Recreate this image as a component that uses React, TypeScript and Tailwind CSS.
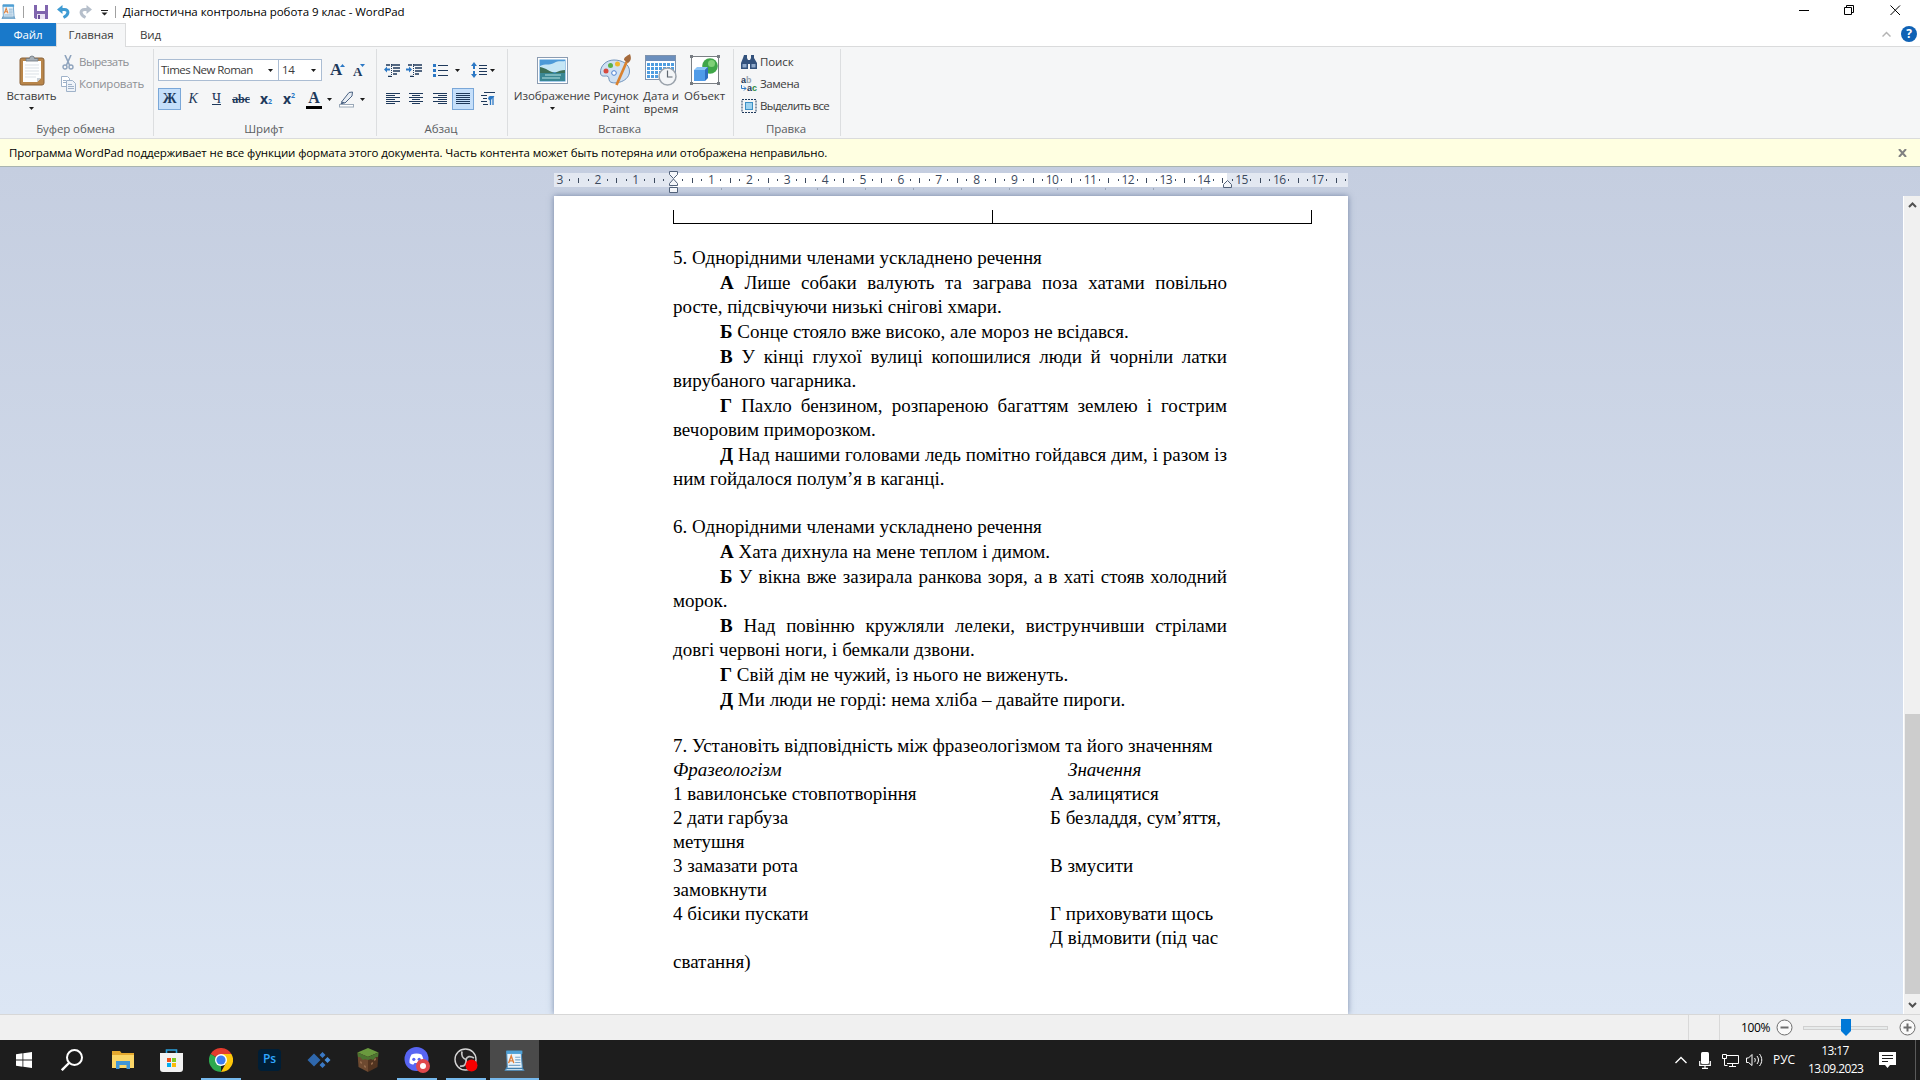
import type { ReactNode } from 'react'
import clsx from 'clsx'

const DOC_LINES_5: DocLine[] = [
  { text: '5. Однорідними членами ускладнено речення' },
  { mark: 'А', text: 'Лише собаки валують та заграва поза хатами повільно', justify: true },
  { text: 'росте, підсвічуючи низькі снігові хмари.' },
  { mark: 'Б', text: 'Сонце стояло вже високо, але мороз не всідався.' },
  { mark: 'В', text: 'У кінці глухої вулиці копошилися люди й чорніли латки', justify: true },
  { text: 'вирубаного чагарника.' },
  { mark: 'Г', text: 'Пахло бензином, розпареною багаттям землею і гострим', justify: true },
  { text: 'вечоровим приморозком.' },
  { mark: 'Д', text: 'Над нашими головами ледь помітно гойдався дим, і разом із', justify: true },
  { text: 'ним гойдалося полум’я в каганці.' },
]

const DOC_LINES_6: DocLine[] = [
  { text: '6. Однорідними членами ускладнено речення' },
  { mark: 'А', text: 'Хата дихнула на мене теплом і димом.' },
  { mark: 'Б', text: 'У вікна вже зазирала ранкова зоря, а в хаті стояв холодний', justify: true },
  { text: 'морок.' },
  { mark: 'В', text: 'Над повінню кружляли лелеки, виструнчивши стрілами', justify: true },
  { text: 'довгі червоні ноги, і бемкали дзвони.' },
  { mark: 'Г', text: 'Свій дім не чужий, із нього не виженуть.' },
  { mark: 'Д', text: 'Ми люди не горді: нема хліба – давайте пироги.' },
]

const PAIRS = [
  ['1 вавилонське стовпотворіння', 'А залицятися'],
  ['2 дати гарбуза', 'Б безладдя, сум’яття,'],
  ['метушня', ''],
  ['3 замазати рота', 'В змусити'],
  ['замовкнути', ''],
  ['4 бісики пускати', 'Г приховувати щось'],
  ['', 'Д відмовити (під час'],
  ['сватання)', ''],
]

type DocLine = { text: string; mark?: string; justify?: boolean }

function Line({ text, mark, justify }: DocLine) {
  return (
    <p
      className={clsx(
        'whitespace-nowrap',
        mark ? 'h-[25px] pt-px pl-[47px]' : 'h-6',
        justify && '[text-align-last:justify]'
      )}
    >
      {mark && <b>{mark} </b>}
      {text}
    </p>
  )
}

function Arrow({ className }: { className?: string }) {
  return (
    <svg className={clsx('shrink-0', className)} width="5" height="3" viewBox="0 0 5 3">
      <path d="M0 0h5L2.500 3z" fill="#1b1b1b" />
    </svg>
  )
}

function Group({ label, className, children }: { label: string; className: string; children: ReactNode }) {
  return (
    <div className={clsx('flex h-[91px] shrink-0 flex-col', className)}>
      <div className="flex h-[73px] w-full">{children}</div>
      <div className="h-[18px] pr-0.5 text-center leading-[17px] text-[#5a5d61]">{label}</div>
    </div>
  )
}

function Sep() {
  return <div className="mt-0.5 h-[87px] w-px shrink-0 bg-[#dcdee0]" />
}

function BigButton({ icon, label, arrow, className }: { icon: ReactNode; label: ReactNode; arrow?: boolean; className: string }) {
  return (
    <div className={clsx('flex shrink-0 flex-col items-center pt-[7px]', className)}>
      <div className="flex h-8 items-center">{icon}</div>
      <div className="mt-[3px] whitespace-nowrap text-center leading-[13px]">{label}</div>
      {arrow && <Arrow className="mt-[5px]" />}
    </div>
  )
}

const BARS = {
  left: [[0, 14], [0, 9], [0, 14], [0, 9], [0, 14], [0, 9]],
  center: [[0, 14], [3, 8], [0, 14], [3, 8], [0, 14], [3, 8]],
  right: [[0, 14], [5, 9], [0, 14], [5, 9], [0, 14], [5, 9]],
  full: [[0, 14], [0, 14], [0, 14], [0, 14], [0, 14], [0, 14]],
}

function AlignIcon({ kind }: { kind: keyof typeof BARS }) {
  return (
    <svg width="14" height="12" viewBox="0 0 14 12" shapeRendering="crispEdges">
      {BARS[kind].map(([x, w], i) => (
        <rect key={i} x={x} y={i * 2} width={w} height="1" fill="#1e395b" />
      ))}
    </svg>
  )
}

function IndentIcon({ flip }: { flip?: boolean }) {
  return (
    <svg width="17" height="13" viewBox="0 0 17 13">
      <path d="M7 1h9M9 4h7M9 7h7M9 10h4M4 12.500h3M2 1h4" stroke="#1e395b" strokeWidth="1.400" />
      <path d="M7.500 0v13" stroke="#1e395b" strokeDasharray="1 1" />
      <path d={flip ? 'M6 5.500 3 2.500v2H0v2h3v2z' : 'M0 5.500l3-3v2h3v2H3v2z'} fill="#2b78c5" />
    </svg>
  )
}

function PasteIcon() {
  return (
    <svg width="26" height="31" viewBox="0 0 26 31">
      <rect x="1" y="3" width="24" height="27" rx="2" fill="#b9864a" stroke="#8a6238" />
      <path d="M4 6h18v17l-4 4H4z" fill="#fdfefe" />
      <path d="M18 27v-4h4z" fill="#c7cfd6" />
      <path d="M6 10h14M6 13h14M6 16h14M6 19h14M6 22h11" stroke="#dbe1e6" />
      <path d="M7 6V3.500h3.500a2.500 2.500 0 0 1 5 0H19V6z" fill="#a7b0b8" stroke="#6d767e" strokeWidth=".8" />
    </svg>
  )
}

function PictureIcon() {
  return (
    <svg width="31" height="27" viewBox="0 0 31 27">
      <rect x=".5" y=".5" width="30" height="26" fill="#fff" stroke="#8b9cb2" />
      <rect x="2.500" y="2.500" width="26" height="22" fill="#4d9ad8" />
      <path d="M3 9c5-3 9 0 14-3s8-1 11-2v11H3z" fill="#c5e6f5" />
      <path d="M3 10c6 1 10 5 15 6H3zM18 16c3-2 7-3 10-3v3z" fill="#3d6f57" />
      <path d="M3 16h25v8H3z" fill="#3a8793" />
      <path d="M8 18h16M5 21h18" stroke="#8ec5c9" strokeWidth="1.500" />
    </svg>
  )
}

function PaintIcon() {
  return (
    <svg width="32" height="32" viewBox="0 0 32 32">
      <path d="M14 6C6 6 0 12 .5 19c.3 4 4 3 6 3 3 0 2 3 3 5 2 4 19 2 20-9C30 10 22 6 14 6z" fill="#cfe0f2" stroke="#6f93bb" />
      <circle cx="6" cy="17" r="2.500" fill="#d64a3f" />
      <circle cx="10.500" cy="11.500" r="2.500" fill="#5cb04a" />
      <circle cx="17.500" cy="10" r="2.500" fill="#f0b62c" />
      <circle cx="14" cy="19" r="2.300" fill="#fff" stroke="#4b7fd0" />
      <path d="M27 7 16.500 31" stroke="#d9822f" strokeWidth="2.600" />
      <path d="M24 6c0-3 3-4 6-6 1 3 2 6-2 9z" fill="#a56a3c" />
    </svg>
  )
}

function DateIcon() {
  return (
    <svg width="32" height="31" viewBox="0 0 32 31">
      <rect x=".5" y=".5" width="30" height="24" fill="#fff" stroke="#7f93ad" />
      <rect x="1" y="1" width="29" height="5" fill="#6b8fbd" />
      <g fill="#4f9de0">
        {[8, 12, 16, 20].map((y) =>
          [2, 6, 10, 14, 18, 22, 26].map((x) => <rect key={`${x}-${y}`} x={x} y={y} width="3" height="3" />)
        )}
      </g>
      <circle cx="22.500" cy="21.500" r="8.500" fill="#f3f5f7" stroke="#9aa2ab" strokeWidth="1.500" />
      <path d="M22.500 15.500v6.500h5" fill="none" stroke="#5d6670" strokeWidth="1.200" />
    </svg>
  )
}

function ObjectIcon() {
  return (
    <svg width="30" height="30" viewBox="0 0 30 30">
      <rect x="1.500" y="1.500" width="27" height="27" fill="#fff" stroke="#7b8085" />
      <path d="M0 0h3v3H0zM27 0h3v3h-3zM0 27h3v3H0zM27 27h3v3h-3z" fill="#777c82" />
      <circle cx="20" cy="11" r="7.800" fill="#3fa648" />
      <circle cx="21.500" cy="8.500" r="3.500" fill="#7fd077" />
      <path d="M4 15h11v11H4z" fill="#4f9be8" />
      <path d="M4 15l3-3h11l-3 3z" fill="#8cc4f7" />
      <path d="M15 15l3-3v11l-3 3z" fill="#2f6fc0" />
    </svg>
  )
}

function WordPadIcon({ size = 16 }: { size?: number }) {
  return (
    <svg width={size} height={size} viewBox="0 0 16 16">
      <path d="M2 1h11l1 13 1 1.500H1L2.500 13z" fill="#eaf4fb" stroke="#4d8fc0" strokeWidth=".8" />
      <path d="M2 .5h12v2.500H2z" fill="#4ea0d6" />
      <path d="M3.500 10 5.500 4.500 7.500 10M4.300 8.300h2.500" fill="none" stroke="#e0803c" strokeWidth="1.100" />
      <path d="M8.500 5.500h4M8.500 7.500h4M8.500 9.500h4M3.500 11.700h9" stroke="#7aa7cb" strokeWidth=".9" />
      <path d="M1.500 14h13" stroke="#3f7fae" />
    </svg>
  )
}

function TitleBar() {
  return (
    <div className="flex h-[23px] w-full items-center bg-white">
      <div className="flex h-full w-[116px] items-center">
        <span className="w-[23px] pl-px"><WordPadIcon size={15} /></span>
        <span className="mr-[10px] h-3 w-px bg-[#a0a0a0]" />
        <svg className="mr-[9px]" width="14" height="14" viewBox="0 0 14 14">
          <path d="M0 0h14v14H1.500L0 12.500z" fill="#8065ae" />
          <path d="M3 0h8v6H3z" fill="#fff" />
          <path d="M3 9h8v5H3z" fill="#e9e4f3" />
          <path d="M4 10h2v4H4z" fill="#6a4f98" />
        </svg>
        <svg className="mr-[9px]" width="13" height="14" viewBox="0 0 13 14">
          <path d="M3 4.500h4.500c4.500 0 5 5-1 8" fill="none" stroke="#3f9bd3" strokeWidth="3" />
          <path d="M5.500 0v9L0 4.500z" fill="#3f9bd3" />
        </svg>
        <svg className="mr-[9px]" width="13" height="14" viewBox="0 0 13 14">
          <path d="M10 4.500H5.500c-4.500 0-5 5 1 8" fill="none" stroke="#b6bfcb" strokeWidth="3" />
          <path d="M7.500 0v9L13 4.500z" fill="#b6bfcb" />
        </svg>
        <svg className="mt-0.5" width="7" height="6" viewBox="0 0 7 6">
          <path d="M0 0h7v1H0zM.5 2.500h6l-3 3z" fill="#222" />
        </svg>
        <span className="ml-auto h-3 w-px bg-[#a0a0a0]" />
      </div>
      <span className="ml-[7px] tracking-[-0.04px] text-black">Діагностична контрольна робота 9 клас - WordPad</span>
      <svg className="mt-[5px] mr-[19px] ml-auto self-start" width="102" height="11" viewBox="0 0 102 11" fill="none" stroke="#000">
        <path d="M0 5.500h10M45.500 2.500h7v7h-7zM47.500 2.500v-2h7v7h-2M91.500.5l9.500 9.500M101 .5 91.500 10" />
      </svg>
    </div>
  )
}

function TabBar() {
  return (
    <div className="flex h-[24px] w-full border-b border-[#dadbdc] bg-white">
      <div className="h-[23px] w-14 bg-[#1979ca] text-center leading-[23px] text-white">Файл</div>
      <div className="h-[24px] w-[70px] border border-b-0 border-[#dadbdc] bg-[#f5f6f7] text-center leading-[21px]">Главная</div>
      <div className="w-[49px] text-center leading-[23px]">Вид</div>
      <svg className="ml-auto mt-2 mr-[10px]" width="9" height="6" viewBox="0 0 9 6">
        <path d="M.5 5.500l4-4 4 4" fill="none" stroke="#b4b4b4" strokeWidth="1.500" />
      </svg>
      <div className="mt-[3px] mr-[3px] h-4 w-4 rounded-full bg-[#0f62b5] text-center text-[12px] font-bold leading-4 text-white">?</div>
    </div>
  )
}

function FontRow() {
  return (
    <div className="flex h-[22px] items-center">
      <div className="flex h-[22px] w-[121px] items-center border border-[#abbdd3] bg-white pl-[2px]">
        <span className="tracking-[-0.55px]">Times New Roman</span>
        <Arrow className="ml-auto mr-[5px]" />
      </div>
      <div className="flex h-[22px] w-[43px] items-center border border-l-0 border-[#abbdd3] bg-white pl-[3px] tracking-[-0.4px]">
        14
        <Arrow className="ml-auto mr-[5px]" />
      </div>
      <div className="ml-2 flex w-[23px] items-center font-['Liberation_Serif',serif] text-[17px] font-bold text-[#1e395b]">
        A
        <svg className="-ml-0.5 mb-2.5" width="5" height="3"><path d="M0 3h5L2.500 0z" fill="#2b78c5" /></svg>
      </div>
      <div className="flex items-center font-['Liberation_Serif',serif] text-[13px] font-bold text-[#1e395b]">
        <span className="pt-1">A</span>
        <svg className="-ml-0.5 mb-2.5" width="5" height="3"><path d="M0 0h5L2.500 3z" fill="#2b78c5" /></svg>
      </div>
    </div>
  )
}

function StyleRow() {
  return (
    <div className="mt-[7px] flex h-[22px] items-center font-['Liberation_Serif',serif] text-[14px] leading-[20px] text-[#1e395b]">
      <div className="h-[22px] w-[23px] border border-[#7aa7d8] bg-[#c5dffa] text-center font-bold">Ж</div>
      <div className="w-6 text-center italic">К</div>
      <div className="w-[23px] text-center underline">Ч</div>
      <div className="w-[26px] text-center text-[12px] font-bold line-through">abc</div>
      <div className="flex w-[24px] justify-center font-['Open_Sans',sans-serif] text-[14px] font-bold leading-[18px]">
        x<span className="pt-1.5 text-[7px] leading-[12px] text-[#2b78c5]">2</span>
      </div>
      <div className="flex w-[22px] justify-center font-['Open_Sans',sans-serif] text-[14px] font-bold leading-[18px]">
        x<span className="text-[7px] leading-[12px] text-[#2b78c5]">2</span>
      </div>
      <div className="ml-[6px] flex h-[19px] w-4 flex-col items-center border-b-[3px] border-black text-[16px] font-bold leading-[16px]">А</div>
      <Arrow className="ml-[5px]" />
      <svg className="ml-[7px]" width="16" height="17" viewBox="0 0 16 17">
        <path d="M2.500 11 10 1.500 13.500 1 13 5 6 12z" fill="#e8edf3" stroke="#4b6384" />
        <path d="M2.500 11 6 12l-5 2z" fill="#4b6384" />
        <rect x=".5" y="13.500" width="14" height="2.500" fill="#fff" stroke="#9aa8b8" />
      </svg>
      <Arrow className="ml-[5px]" />
    </div>
  )
}

function ParagraphGroup() {
  return (
    <div className="flex flex-col pl-[7px] pt-3">
      <div className="flex h-[22px] items-center">
        <IndentIcon />
        <span className="ml-[5px]"><IndentIcon flip /></span>
        <svg className="ml-[10px]" width="15" height="13" viewBox="0 0 15 13">
          <path d="M0 0h3v3H0zM0 5h3v3H0zM0 10h3v3H0z" fill="#2b78c5" />
          <path d="M5 1.500h10M5 6.500h10M5 11.500h10" stroke="#1e395b" />
        </svg>
        <Arrow className="ml-[7px]" />
        <svg className="ml-[11px]" width="16" height="16" viewBox="0 0 16 16">
          <path d="M3 0l3 4H4v3H2V4H0zM3 16l3-4H4V9H2v3H0z" fill="#2b78c5" />
          <path d="M8 3.500h8M8 6.500h8M8 9.500h8M8 12.500h8" stroke="#1e395b" />
        </svg>
        <Arrow className="ml-[3px]" />
      </div>
      <div className="mt-[7px] flex h-[22px] items-center pl-px">
        <span className="w-[24px] pl-[1px]"><AlignIcon kind="left" /></span>
        <span className="w-[24px]"><AlignIcon kind="center" /></span>
        <span className="w-[19px]"><AlignIcon kind="right" /></span>
        <span className="flex h-[22px] w-[22px] items-center justify-center border border-[#7aa7d8] bg-[#c5dffa]">
          <AlignIcon kind="full" />
        </span>
        <svg className="ml-[7px]" width="14" height="14" viewBox="0 0 14 14">
          <path d="M3 .5h11M0 3.500h6M2 6.500h4M0 9.500h6M2 12.500h5" stroke="#1e395b" />
          <path d="M9.500 4v9M12 4v9" stroke="#2b78c5" strokeWidth="1.300" />
          <path d="M13.500 4H9.500a2.300 2.300 0 0 0 0 4.600z" fill="#2b78c5" />
        </svg>
      </div>
    </div>
  )
}

function Ribbon() {
  return (
    <div className="flex h-[92px] w-full border-b border-[#dadbdc] bg-[#f5f6f7]">
      <Group label="Буфер обмена" className="w-[153px]">
        <BigButton icon={<PasteIcon />} label="Вставить" arrow className="w-[61px] pl-[2px]" />
        <div className="flex flex-col pt-1 text-[#8d9095]">
          <div className="flex h-[22px] items-center tracking-[-0.5px]">
            <svg className="ml-px mr-[5px]" width="12" height="15" viewBox="0 0 12 15" fill="none" stroke="#8ea3bd">
              <path d="M3 0l4.500 10M9 0 4.500 10" strokeWidth="1.600" />
              <circle cx="3" cy="12" r="2" strokeWidth="1.400" />
              <circle cx="9" cy="12" r="2" strokeWidth="1.400" />
            </svg>
            Вырезать
          </div>
          <div className="flex h-[22px] items-center tracking-[-0.25px]">
            <svg className="mr-[3px]" width="15" height="16" viewBox="0 0 15 16" stroke="#9fb2c9">
              <path d="M.5.5h6l2 2v8h-8z" fill="#fff" />
              <path d="M5.500 4.500h6l3 3v8h-9z" fill="#eef3f9" />
              <path d="M7 8.500h4M7 10.500h6M7 12.500h6M2 4.500h3M2 6.500h3" />
            </svg>
            Копировать
          </div>
        </div>
      </Group>
      <Sep />
      <Group label="Шрифт" className="w-[222px]">
        <div className="flex flex-col pl-1 pt-3">
          <FontRow />
          <StyleRow />
        </div>
      </Group>
      <Sep />
      <Group label="Абзац" className="w-[130px]">
        <ParagraphGroup />
      </Group>
      <Sep />
      <Group label="Вставка" className="w-[225px]">
        <BigButton icon={<PictureIcon />} label="Изображение" arrow className="ml-[5px] w-[78px]" />
        <BigButton icon={<PaintIcon />} label={<>Рисунок<br />Paint</>} className="w-[50px]" />
        <BigButton icon={<DateIcon />} label={<>Дата и<br />время</>} className="w-[40px]" />
        <BigButton icon={<ObjectIcon />} label="Объект" className="w-[47px]" />
      </Group>
      <Sep />
      <Group label="Правка" className="w-[106px]">
        <div className="flex flex-col pl-[7px] pt-1">
          <div className="flex h-[22px] items-center gap-[3px]">
            <svg width="16" height="14" viewBox="0 0 16 14" fill="#33527d">
              <path d="M3 0h3v3l1 2v9H0V8l2-5zM10 0h3v3l3 5v6H9V5l1-2zM6 5h4v4H6z" />
              <path d="M1.500 9h4v3.500h-4zM10.500 9h4v3.500h-4z" fill="#8fa9cb" />
            </svg>
            Поиск
          </div>
          <div className="flex h-[22px] items-center gap-[3px] tracking-[-0.4px]">
            <div className="flex h-4 w-4 flex-col font-['Liberation_Sans',sans-serif] text-[9px] font-bold leading-[8px] tracking-normal text-[#1e395b]">
              <span className="h-2">a<span className="text-[#9aa3ad]">b</span></span>
              <span className="flex h-2 items-center">
                <svg width="6" height="6" viewBox="0 0 6 6"><path d="M.5 0v3.500H5M3 1.500l2 2-2 2" fill="none" stroke="#2b78c5" /></svg>
                a<span className="text-[#2e8b45]">c</span>
              </span>
            </div>
            Замена
          </div>
          <div className="flex h-[22px] items-center gap-[3px] whitespace-nowrap tracking-[-0.65px]">
            <svg width="16" height="14" viewBox="0 0 16 14">
              <rect x="1" y=".5" width="14" height="13" fill="none" stroke="#1e395b" strokeDasharray="2 1" />
              <rect x="4.500" y="3.500" width="7" height="7" fill="#9ed3f0" stroke="#3c8fc4" />
            </svg>
            Выделить все
          </div>
        </div>
      </Group>
      <Sep />
    </div>
  )
}

function rulerMark(k: number) {
  if (k === 0) return null
  if (k % 4 === 0) return Math.abs(k / 4)
  if (k % 2 === 0) return <span className="h-[5px] w-px bg-[#3c4a5e]" />
  return <span className="h-[2px] w-px bg-[#3c4a5e]" />
}

function Ruler() {
  const marks = Array.from({ length: 84 }, (_, i) => i - 12)
  return (
    <div className="relative h-[29px] w-[794px] pt-[6px]">
      <div className="flex h-[14px] bg-[linear-gradient(90deg,#e3e8f1_119px,#fff_119px,#fff_673px,#e3e8f1_673px)] text-[12px] tracking-[-0.5px] text-[#3c4a5e]">
        <div className="flex items-center pl-[1px]">
          {marks.map((k) => (
            <span key={k} className="flex w-[9.47px] shrink-0 items-center justify-center">
              {rulerMark(k)}
            </span>
          ))}
        </div>
      </div>
      <div className="flex pl-[167px]">
        {Array.from({ length: 11 }, (_, i) => (
          <span key={i} className="mt-px mr-[47px] h-[2px] w-px bg-[#9aa6b8]" />
        ))}
      </div>
      <svg className="absolute left-[115px] top-[4px]" width="9" height="23" viewBox="0 0 9 23" fill="#f4f6fa" stroke="#52627a">
        <path d="M.5.5h8v3l-4 4-4-4zM.5 14.500v-2l4-4.500 4 4.500v2zM.5 16.500h8v5h-8z" />
      </svg>
      <svg className="absolute left-[669px] top-[13px]" width="9" height="8" viewBox="0 0 9 8" fill="#f4f6fa" stroke="#52627a">
        <path d="M.5 7.500v-3l4-4 4 4v3z" />
      </svg>
    </div>
  )
}

function Page() {
  return (
    <div className="flex h-[818px] w-[794px] flex-col bg-white pl-[119px] shadow-[0_0_6px_rgba(70,90,130,0.65)]">
      <div className="mt-[14px] flex h-[14px] w-[639px] border border-t-0 border-black">
        <div className="w-[319px] border-r border-black" />
      </div>
      <div className="mt-[22px] w-[554px] font-['Liberation_Serif','Times_New_Roman',serif] text-[19px] leading-6 tracking-normal text-black">
        {DOC_LINES_5.map((l, i) => <Line key={i} {...l} />)}
        <div className="h-6" />
        {DOC_LINES_6.map((l, i) => <Line key={i} {...l} />)}
        <div className="h-[22px]" />
        <Line text="7. Установіть відповідність між фразеологізмом та його значенням" />
        <div className="flex h-6 italic">
          <span className="w-[395px]">Фразеологізм</span>
          <span>Значення</span>
        </div>
        {PAIRS.map(([left, right], i) => (
          <div key={i} className="flex h-6 whitespace-nowrap">
            <span className="w-[377px]">{left}</span>
            <span>{right}</span>
          </div>
        ))}
      </div>
    </div>
  )
}

function ScrollBar() {
  return (
    <div className="flex h-[818px] w-[17px] flex-col items-center border-l border-white bg-[#f0f0f0]">
      <svg className="mt-[6px]" width="9" height="6" viewBox="0 0 9 6"><path d="M1 5l3.500-3.500L8 5" fill="none" stroke="#505050" strokeWidth="2" /></svg>
      <div className="mt-[506px] h-[280px] w-[15px] bg-[#cdcdcd]" />
      <svg className="mt-[8px]" width="9" height="6" viewBox="0 0 9 6"><path d="M1 1l3.500 3.500L8 1" fill="none" stroke="#505050" strokeWidth="2" /></svg>
    </div>
  )
}

function StatusBar() {
  return (
    <div className="flex h-[26px] w-full items-center justify-end border-t border-[#d7d7d7] bg-[#f0f0f0] text-black">
      <span className="h-full w-px bg-[#d9d9d9]" />
      <span className="ml-[30px] h-full w-px bg-[#d9d9d9]" />
      <span className="ml-[21px] w-[30px] whitespace-nowrap text-[12px] tracking-[-0.4px]">100%</span>
      <svg className="ml-[5px]" width="17" height="17" viewBox="0 0 17 17" fill="#fafafa" stroke="#6e6e6e">
        <circle cx="8.500" cy="8.500" r="7.500" />
        <path d="M4.500 8.500h8" strokeWidth="2" />
      </svg>
      <svg className="ml-[10px]" width="86" height="20" viewBox="0 0 86 20">
        <rect x=".5" y="8.500" width="84" height="3" fill="#e7eaea" stroke="#d0d0d0" />
        <path d="M38 1h10v12l-5 5-5-5z" fill="#0078d7" />
      </svg>
      <svg className="ml-[10px] mr-[4px]" width="17" height="17" viewBox="0 0 17 17" fill="#fafafa" stroke="#6e6e6e">
        <circle cx="8.500" cy="8.500" r="7.500" />
        <path d="M4.500 8.500h8M8.500 4.500v8" strokeWidth="2" />
      </svg>
    </div>
  )
}

function TaskItem({ children, running, active }: { children: ReactNode; running?: boolean; active?: boolean }) {
  return (
    <div className={clsx('flex h-10 w-[49px] shrink-0 flex-col items-center', active && 'bg-[#4a4a4a]')}>
      <div className="flex h-[38px] items-center pt-[2px]">{children}</div>
      {running && <div className={clsx('h-[2px] bg-[#76b9ed]', active ? 'w-full' : 'w-10')} />}
    </div>
  )
}

function TaskBar() {
  return (
    <div className="flex h-10 w-full items-center bg-[#1d1d1d] text-white">
      <TaskItem>
        <svg className="mr-px" width="16" height="16" viewBox="0 0 16 16" fill="#fff">
          <path d="M0 2.200 6.500 1.300v6.300H0zM7.300 1.200 16 0v7.600H7.300zM0 8.400h6.500v6.300L0 13.800zM7.300 8.400H16V16l-8.700-1.200z" />
        </svg>
      </TaskItem>
      <TaskItem>
        <svg className="mr-[3px]" width="22" height="22" viewBox="0 0 22 22" fill="none" stroke="#fff" strokeWidth="2">
          <circle cx="13.500" cy="8.500" r="7.500" />
          <path d="M8 14 .8 21.200" strokeWidth="2.400" />
        </svg>
      </TaskItem>
      <TaskItem>
        <svg width="22" height="18" viewBox="0 0 22 18">
          <path d="M0 0h8l1.500 2H22v15H0z" fill="#e5a92f" />
          <path d="M0 4h22v13H0z" fill="#fbd667" />
          <path d="M4 18v-8h14v8h-3.500v-4h-7v4z" fill="#3f96d8" />
        </svg>
      </TaskItem>
      <TaskItem>
        <svg width="23" height="23" viewBox="0 0 23 23">
          <path d="M6.500 5V1h10v4" fill="none" stroke="#2aa0dc" strokeWidth="1.600" />
          <path d="M0 4h23v16a3 3 0 0 1-3 3H3a3 3 0 0 1-3-3z" fill="#f2f2f2" />
          <path d="M7 9h4v4H7z" fill="#f1511b" />
          <path d="M12 9h4v4h-4z" fill="#80cc28" />
          <path d="M7 14h4v4H7z" fill="#00adef" />
          <path d="M12 14h4v4h-4z" fill="#fbbc09" />
        </svg>
      </TaskItem>
      <TaskItem running>
        <svg width="24" height="24" viewBox="0 0 24 24">
          <path d="M12 12 1.600 6a12 12 0 0 1 20.800 0z" fill="#e33b2e" />
          <path d="M12 12v12A12 12 0 0 1 1.600 6z" fill="#2da94f" />
          <path d="M12 6h10.400A12 12 0 0 1 12 24l5-9z" fill="#fdc60a" />
          <circle cx="12" cy="12" r="6" fill="#fff" />
          <circle cx="12" cy="12" r="4.600" fill="#3d7df0" />
        </svg>
      </TaskItem>
      <TaskItem>
        <div className="h-[22px] w-[23px] rounded-[4px] bg-[#001e36] text-center text-[12px] font-semibold leading-[20px] text-[#31a8ff]">Ps</div>
      </TaskItem>
      <TaskItem>
        <svg width="24" height="16" viewBox="0 0 24 16">
          <path d="M7 1.500 13.500 8 7 14.500.5 8z" fill="#2f68ad" />
          <path d="M15.500 0 18.500 3l-3 3-3-3zM15.500 10l3 3-3 3-3-3z" fill="#3a78c4" />
          <path d="M20.500 5l3 3-3 3-3-3z" fill="#4a90dc" />
        </svg>
      </TaskItem>
      <TaskItem>
        <svg width="22" height="24" viewBox="0 0 22 24">
          <path d="M11 0l10.500 4.500L11 9 .5 4.500z" fill="#6a9a3e" />
          <path d="M.5 4.500 11 9v15L1.500 19z" fill="#6e4a30" />
          <path d="M21.500 4.500 11 9v15l9.500-5z" fill="#523420" />
          <path d="M.5 4.500 11 9v3l-3-1-2 1-3-3-2 0zM21.500 4.500 11 9v3l3-1 2 1 3-3 2 0z" fill="#4c7530" />
          <path d="M3 13l2 1v2l-2-1zM7 17l2 1v2l-2-1zM14 15l2-1v2l-2 1zM17 11l2-1v2l-2 1z" fill="#93694a" />
        </svg>
      </TaskItem>
      <TaskItem running>
        <svg width="26" height="26" viewBox="0 0 26 26">
          <circle cx="12.500" cy="12" r="12" fill="#5865f2" />
          <path d="M7.500 7.500c3-1.300 7-1.300 10 0 1.500 2.500 2.300 5.500 2 8.500-1.500 1.200-3 1.500-4 1.500l-1-1.500h-4l-1 1.500c-1 0-2.500-.3-4-1.500-.3-3 .5-6 2-8.500z" fill="#fff" />
          <circle cx="9.800" cy="12.300" r="1.600" fill="#5865f2" />
          <circle cx="15.200" cy="12.300" r="1.600" fill="#5865f2" />
          <circle cx="19" cy="19" r="7" fill="#e0484c" />
          <circle cx="19" cy="19" r="3" fill="#fff" />
        </svg>
      </TaskItem>
      <TaskItem running>
        <svg width="24" height="24" viewBox="0 0 24 24" fill="none">
          <circle cx="11.500" cy="11.500" r="10.500" fill="#211f20" stroke="#d5d5d5" strokeWidth="1.400" />
          <path d="M8 3.500c-1 4 1 7 4 8M20 10c-4-2.500-7-1.500-8 1.500M6 18c4 1 7-2 6-6.500" stroke="#c4c4c4" strokeWidth="1.800" />
          <circle cx="17.500" cy="17.500" r="6" fill="#f80000" />
        </svg>
      </TaskItem>
      <TaskItem running active>
        <WordPadIcon size={21} />
      </TaskItem>

      <div className="ml-auto flex items-center">
        <svg width="12" height="8" viewBox="0 0 12 8"><path d="M.5 7 6 1.500 11.500 7" fill="none" stroke="#fff" strokeWidth="1.400" /></svg>
        <svg className="ml-[12px]" width="12" height="17" viewBox="0 0 12 17">
          <rect x="2" y="0" width="8" height="12" rx="1.500" fill="#fff" />
          <path d="M.7 9v4.300h10.600V9M6 13v3M3 16.300h6" fill="none" stroke="#fff" strokeWidth="1.200" />
        </svg>
        <svg className="ml-[11px]" width="17" height="15" viewBox="0 0 17 15" fill="none" stroke="#fff">
          <path d="M5 2.500h11.500v8H5M10.500 10.500v3M7 13.500h7M.5 1.500h4v4h-4zM2.500 5.500v7h3" />
        </svg>
        <svg className="ml-[7px]" width="17" height="14" viewBox="0 0 17 14" fill="none" stroke="#fff">
          <path d="M.5 5v4.500h2l3.500 3v-11L2.500 5zM8.500 5c1 1.200 1 3 0 4.200M11 3c2 2.500 2 5.500 0 8M13.500 1c3 4 3 8 0 12" />
        </svg>
        <span className="ml-[10px] text-[12px] tracking-[-0.1px]">РУС</span>
        <div className="ml-[13px] w-[54px] whitespace-nowrap text-center text-[12px] leading-[18px] tracking-[-0.6px]">
          <div>13:17</div>
          <div>13.09.2023</div>
        </div>
        <svg className="ml-[17px] mr-[19px]" width="17" height="16" viewBox="0 0 17 16">
          <path d="M0 0h17v13h-6L8.500 16 6 13H0z" fill="#fff" />
          <path d="M3 3.500h11M3 6.500h11M3 9.500h6" stroke="#1d1d1d" />
        </svg>
        <span className="mr-1 h-10 w-px bg-[#5a5a5a]" />
      </div>
    </div>
  )
}

export default function App() {
  return (
    <div className="flex h-[1080px] w-[1920px] flex-col overflow-hidden font-['Open_Sans','Noto_Sans',sans-serif] text-[11.5px] tracking-[-0.1px] text-[#3b3b3b]">
      <TitleBar />
      <TabBar />
      <Ribbon />
      <div className="flex h-7 w-full items-center border-b border-[#a9b4b0] bg-[#ffffe1] pl-[9px] text-black">
        <span className="tracking-[-0.11px]">Программа WordPad поддерживает не все функции формата этого документа. Часть контента может быть потеряна или отображена неправильно.</span>
        <svg className="ml-auto mr-[13px]" width="9" height="8" viewBox="0 0 9 8"><path d="M1 0l7 8M8 0 1 8" stroke="#808080" strokeWidth="2" /></svg>
      </div>
      <div className="flex h-[847px] w-full bg-[linear-gradient(180deg,#c5cee0,#dce6f4)]">
        <div className="flex flex-1 flex-col overflow-hidden pl-[554px]">
          <Ruler />
          <Page />
        </div>
        <div className="flex flex-col pt-[29px]">
          <ScrollBar />
        </div>
      </div>
      <StatusBar />
      <TaskBar />
    </div>
  )
}
